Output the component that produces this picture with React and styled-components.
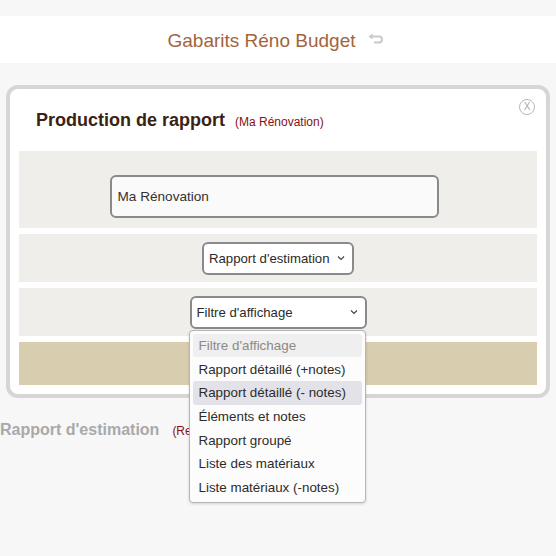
import React from "react"
import styled, { createGlobalStyle } from "styled-components"

const Global = createGlobalStyle`
  body {
    margin: 0;
    background: #f7f7f7;
    font-family: "Liberation Sans", Arial, sans-serif;
  }
`

const Page = styled.div`
  width: 556px;
  height: 556px;
  overflow: hidden;
  padding-top: 16px;
  box-sizing: border-box;
`

const Header = styled.div`
  height: 47px;
  box-sizing: border-box;
  padding: 3px 5px 0 0;
  background: #fff;
  display: flex;
  align-items: center;
  justify-content: center;
`

const HeaderTitle = styled.span`
  font-size: 19px;
  color: #a3643d;
`

const BackIcon = styled.svg`
  margin-left: 12px;
  margin-top: -3px;
`

const Modal = styled.div`
  position: relative;
  margin: 22px 6px 0;
  border: 4px solid #d6d6d6;
  border-radius: 12px;
  background: #fff;
  padding: 0 9px 9px;
`

const Close = styled.div`
  position: absolute;
  top: 10px;
  right: 11px;
  width: 14px;
  height: 14px;
  border: 1px solid #b8b8b8;
  border-radius: 50%;
  color: #a8a8a8;
  font-size: 10px;
  line-height: 14px;
  text-align: center;
`

const ModalHead = styled.div`
  height: 62px;
  display: flex;
  align-items: center;
  padding-left: 17px;
`

const ModalTitle = styled.span`
  font-size: 18px;
  font-weight: bold;
  color: #3b2314;
`

const Sub = styled.span`
  font-size: 12px;
  color: #8b0f0f;
  margin-left: 10px;
  margin-top: 3px;
`

const Rows = styled.div`
  display: flex;
  flex-direction: column;
  gap: 6px;
`

const Row = styled.div`
  background: ${p => (p.$tan ? "#d8cdae" : "#efeeea")};
  height: ${p => p.$h}px;
  box-sizing: border-box;
  padding-top: ${p => p.$pt || 0}px;
  display: flex;
  justify-content: center;
  align-items: ${p => (p.$pt ? "flex-start" : "center")};
`

const Input = styled.div`
  width: 329px;
  height: 43px;
  box-sizing: border-box;
  margin-right: 8px;
  border: 2px solid #8a8a8a;
  border-radius: 6px;
  background: #fafafa;
  display: flex;
  align-items: center;
  padding-left: 6px;
  font-size: 13.6px;
  color: #333;
`

const SelectWrap = styled.div`
  position: relative;
`

const Select = styled.div`
  width: ${p => p.$w}px;
  height: 33px;
  box-sizing: border-box;
  border: 2px solid #8a8a8a;
  border-radius: 6px;
  background: #fff;
  display: flex;
  align-items: center;
  justify-content: space-between;
  padding: 0 7px 0 5px;
  font-size: 13.2px;
  color: #2a2a2a;
`

const Chevron = styled.svg`
  flex: none;
`

const Menu = styled.div`
  position: absolute;
  top: 34px;
  left: -1px;
  width: 177px;
  box-sizing: border-box;
  padding: 3px;
  background: #fcfcfc;
  border: 1px solid #b5b5b5;
  border-radius: 4px;
  box-shadow: 0 1px 3px rgba(0, 0, 0, 0.15);
  z-index: 5;
`

const Option = styled.div`
  height: 23.7px;
  display: flex;
  align-items: center;
  padding-left: 6px;
  border-radius: 3px;
  font-size: 13.4px;
  white-space: nowrap;
  color: ${p => (p.$muted ? "#8a8a8a" : "#2c2c2c")};
  background: ${p => p.$bg || "transparent"};
`

const Below = styled.div`
  display: flex;
  align-items: baseline;
  margin-top: 23px;
`

const BelowTitle = styled.span`
  font-size: 16px;
  font-weight: bold;
  color: #a9a9a9;
`

const BelowSub = styled.span`
  font-size: 12px;
  color: #8b0f0f;
  margin-left: 13px;
`

const options = [
  "Rapport détaillé (+notes)",
  "Rapport détaillé (- notes)",
  "Éléments et notes",
  "Rapport groupé",
  "Liste des matériaux",
  "Liste matériaux (-notes)",
]

function Down() {
  return (
    <Chevron width="8" height="6" viewBox="0 0 8 6">
      <path d="M1 1.5 4 4.5 7 1.5" fill="none" stroke="#444" strokeWidth="1.2" />
    </Chevron>
  )
}

export default function App() {
  return (
    <Page>
      <Global />
      <Header>
        <HeaderTitle>Gabarits Réno Budget</HeaderTitle>
        <BackIcon width="16" height="13" viewBox="0 0 16 13">
          <path
            d="M3 3.5h8a3 3 0 0 1 0 6H6"
            fill="none"
            stroke="#c9c9c9"
            strokeWidth="2"
          />
          <path d="M0.5 3.5 4.5 0.5v6z" fill="#c9c9c9" />
        </BackIcon>
      </Header>
      <Modal>
        <Close>X</Close>
        <ModalHead>
          <ModalTitle>Production de rapport</ModalTitle>
          <Sub>(Ma Rénovation)</Sub>
        </ModalHead>
        <Rows>
          <Row $h={77} $pt={24}>
            <Input>Ma Rénovation</Input>
          </Row>
          <Row $h={48}>
            <Select $w={152}>
              Rapport d'estimation
              <Down />
            </Select>
          </Row>
          <Row $h={48}>
            <SelectWrap>
              <Select $w={177}>
                Filtre d'affichage
                <Down />
              </Select>
              <Menu>
                <Option $muted $bg="#efefef">Filtre d'affichage</Option>
                {options.map((o, i) => (
                  <Option key={o} $bg={i === 1 ? "#e2e2e8" : undefined}>
                    {o}
                  </Option>
                ))}
              </Menu>
            </SelectWrap>
          </Row>
          <Row $h={43} $tan />
        </Rows>
      </Modal>
      <Below>
        <BelowTitle>Rapport d'estimation</BelowTitle>
        <BelowSub>(Recherche)</BelowSub>
      </Below>
    </Page>
  )
}
